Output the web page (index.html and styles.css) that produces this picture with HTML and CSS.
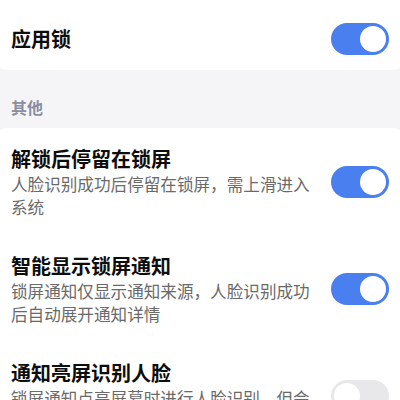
FILE: index.html
```html
<!DOCTYPE html>
<html lang="zh-CN">
<head>
<meta charset="utf-8">
<link rel="stylesheet" href="styles.css">
</head>
<body>
<div class="page">
  <div class="card card-top">
    <div class="row row-single">
      <div class="title">应用锁</div>
      <div class="switch on"><span class="knob"></span></div>
    </div>
  </div>
  <div class="section">其他</div>
  <div class="card">
    <div class="row">
      <div class="text">
        <div class="title">解锁后停留在锁屏</div>
        <div class="desc">人脸识别成功后停留在锁屏，需上滑进入系统</div>
      </div>
      <div class="switch on"><span class="knob"></span></div>
    </div>
    <div class="row">
      <div class="text">
        <div class="title">智能显示锁屏通知</div>
        <div class="desc">锁屏通知仅显示通知来源，人脸识别成功后自动展开通知详情</div>
      </div>
      <div class="switch on"><span class="knob"></span></div>
    </div>
    <div class="row">
      <div class="text">
        <div class="title">通知亮屏识别人脸</div>
        <div class="desc">锁屏通知点亮屏幕时进行人脸识别，但会增加耗电</div>
      </div>
      <div class="switch off"><span class="knob"></span></div>
    </div>
  </div>
</div>
</body>
</html>
```

FILE: styles.css
```css
html, body {
  margin: 0;
  padding: 0;
  background: #f5f5f7;
  overflow: hidden;
}
body {
  font-family: "Noto Sans CJK SC", "Noto Sans", sans-serif;
  width: 400px;
  height: 400px;
}
.page {
  display: flex;
  flex-direction: column;
}
.card {
  background: #ffffff;
  margin: 0 -8px;
  padding: 0 19px;
  border-radius: 16px;
}
.card-top {
  border-radius: 0 0 16px 16px;
}
.row {
  display: flex;
  align-items: center;
  gap: 16px;
  padding: 17px 0;
}
.row-single {
  justify-content: space-between;
  padding: 23px 0 15px;
}
.text {
  flex: 1;
  min-width: 0;
}
.title {
  font-size: 20px;
  line-height: 28px;
  font-weight: 700;
  color: #0d0d0d;
}
.desc {
  font-size: 16.6px;
  line-height: 22.5px;
  color: #6a6a6a;
}
.section {
  font-size: 16px;
  line-height: 22px;
  font-weight: 700;
  color: #8a8ea3;
  padding: 26px 11px 10px;
}
.switch {
  flex: none;
  width: 58px;
  height: 32px;
  border-radius: 16px;
  box-sizing: border-box;
  padding: 3px;
  display: flex;
}
.switch.on {
  background: #4a7ff0;
  justify-content: flex-end;
}
.switch.off {
  background: #e8e8ea;
  justify-content: flex-start;
}
.knob {
  width: 26px;
  height: 26px;
  border-radius: 50%;
  background: #ffffff;
}
```
